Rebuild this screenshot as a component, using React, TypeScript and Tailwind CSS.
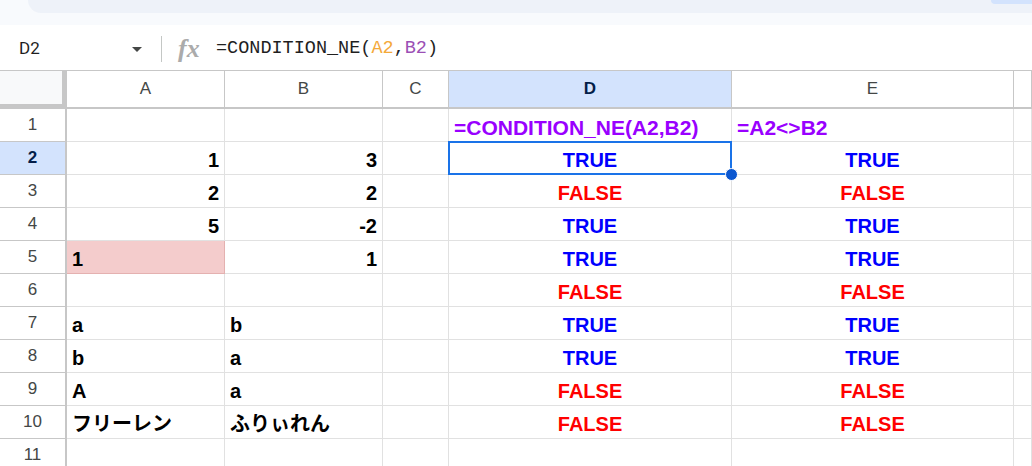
import type { ReactNode } from 'react';

type Kind = 'num' | 'text' | 'true' | 'false' | 'formula' | 'empty';

type Cell = {
  value: string;
  kind: Kind;
  highlight?: boolean;
};

const COLUMNS = ['A', 'B', 'C', 'D', 'E', ''];
const ACTIVE_COL = 'D';
const ACTIVE_ROW = 2;

const n = (value: string): Cell => ({ value, kind: 'num' });
const t = (value: string): Cell => ({ value, kind: 'text' });
const b = (value: boolean): Cell => ({ value: value ? 'TRUE' : 'FALSE', kind: value ? 'true' : 'false' });
const f = (value: string): Cell => ({ value, kind: 'formula' });
const e: Cell = { value: '', kind: 'empty' };

// A, B, C, D, E — column F is only a sliver at the right edge
const ROWS: Cell[][] = [
  [e, e, e, f('=CONDITION_NE(A2,B2)'), f('=A2<>B2')],
  [n('1'), n('3'), e, b(true), b(true)],
  [n('2'), n('2'), e, b(false), b(false)],
  [n('5'), n('-2'), e, b(true), b(true)],
  [{ value: '1', kind: 'text', highlight: true }, n('1'), e, b(true), b(true)],
  [e, e, e, b(false), b(false)],
  [t('a'), t('b'), e, b(true), b(true)],
  [t('b'), t('a'), e, b(true), b(true)],
  [t('A'), t('a'), e, b(false), b(false)],
  [t('フリーレン'), t('ふりぃれん'), e, b(false), b(false)],
  [e, e, e, e, e],
];

const KIND_CLASS: Record<Kind, string> = {
  num: 'justify-end pr-[5px] text-black',
  text: 'justify-start pl-[5px] text-black',
  true: 'justify-center text-[#0000ff] text-[20.5px]',
  false: 'justify-center text-[#ff0000] text-[20.5px]',
  formula: 'justify-start pl-[5px] text-[#9900ff] text-[21px]',
  empty: '',
};

function FormulaBar() {
  return (
    <div className="flex h-[45px] items-center bg-white pt-[3px]">
      <div className="flex w-[161px] items-center justify-between pr-[19px] pl-[19px]">
        <span className="font-['Roboto','Liberation_Sans',sans-serif] text-[17px] text-[#1f1f1f]">D2</span>
        <span className="h-0 w-0 border-x-[5.5px] border-t-[5px] border-x-transparent border-t-[#444746]" />
      </div>
      <div className="h-[26px] w-px bg-[#c4c7c5]" />
      <span className="ml-[16px] w-[38px] font-['Liberation_Serif',serif] text-[26px] leading-none font-bold italic text-[#ababab]">
        fx
      </span>
      <span className="font-['Liberation_Mono',monospace] text-[18.5px] text-[#1f1f1f]">
        =CONDITION_NE(<span className="text-[#f4a93a]">A2</span>,<span className="text-[#9b4fb5]">B2</span>)
      </span>
    </div>
  );
}

function HeaderCell({ label, active }: { label: string; active: boolean }) {
  return (
    <div
      className={`flex h-[39px] items-center justify-center border-t border-r border-b-2 border-[#c7c7c7] font-['Liberation_Sans',Arial,sans-serif] text-[17px] ${
        active ? 'bg-[#d3e3fd] font-bold text-[#041e49]' : 'bg-white text-[#444746]'
      }`}
    >
      {label}
    </div>
  );
}

function RowHeader({ index }: { index: number }) {
  const active = index === ACTIVE_ROW;
  return (
    <div
      className={`flex h-[33px] items-center justify-center border-r-2 border-b border-[#c7c7c7] font-['Liberation_Sans',Arial,sans-serif] text-[17px] ${
        active ? 'bg-[#d3e3fd] font-bold text-[#041e49]' : 'bg-white text-[#444746]'
      }`}
    >
      {index}
    </div>
  );
}

function DataCell({ cell, selected, children }: { cell: Cell; selected?: boolean; children?: ReactNode }) {
  return (
    <div
      className={`relative flex h-[33px] items-end overflow-visible whitespace-nowrap border-r border-b pb-[2px] font-['Liberation_Sans','Noto_Sans_CJK_JP',sans-serif] text-[20px] leading-[23px] font-bold ${
        cell.highlight ? 'border-[#e4b1b0] bg-[#f4cccc]' : 'border-[#e1e1e1]'
      } ${KIND_CLASS[cell.kind]}`}
    >
      {cell.value}
      {selected && (
        <div className="pointer-events-none absolute -top-px -right-px -bottom-px -left-px z-10 border-2 border-[#1a73e8]">
          <div className="absolute -right-[8px] -bottom-[8px] h-[13px] w-[13px] rounded-full border border-white bg-[#0b57d0]" />
        </div>
      )}
      {children}
    </div>
  );
}

export default function App() {
  return (
    <div className="h-[466px] w-[1032px] overflow-hidden bg-white">
      {/* toolbar edge above the formula bar */}
      <div className="h-[25px] bg-[#f8fafd]">
        <div className="ml-[28px] flex h-[13px] justify-end rounded-bl-[14px] bg-[#eef2f9]">
          <div className="h-[4px] w-[41px] rounded-bl-[6px] bg-[#d3e3fd]" />
        </div>
      </div>

      <FormulaBar />

      <div className="grid grid-cols-[67px_158px_158px_66px_283px_282px_1fr]">
        <div className="h-[39px] border-t border-[#c7c7c7] bg-[#f8f9fa]">
          <div className="h-[38px] border-r-[5px] border-b-[5px] border-[#c7c7c7]" />
        </div>
        {COLUMNS.map((col) => (
          <HeaderCell key={col || 'F'} label={col} active={col === ACTIVE_COL} />
        ))}

        {ROWS.map((row, r) => (
          <div key={r} className="contents">
            <RowHeader index={r + 1} />
            {row.map((cell, c) => (
              <DataCell
                key={c}
                cell={cell}
                selected={r + 1 === ACTIVE_ROW && COLUMNS[c] === ACTIVE_COL}
              />
            ))}
            <DataCell cell={e} />
          </div>
        ))}
      </div>
    </div>
  );
}
